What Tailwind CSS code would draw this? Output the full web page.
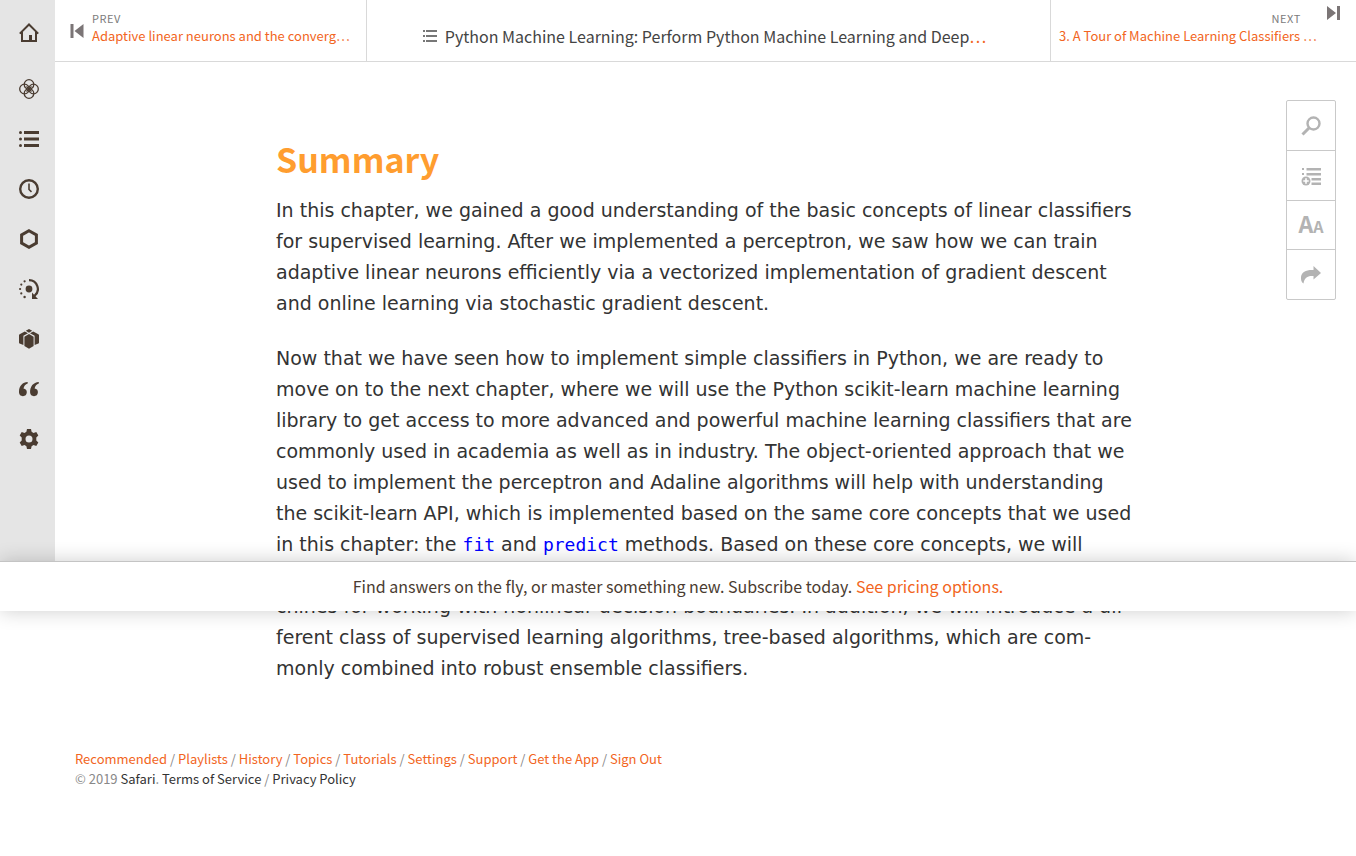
<!DOCTYPE html>
<html lang="en">
<head>
<meta charset="utf-8">
<title>Summary - Python Machine Learning</title>
<script src="https://cdn.jsdelivr.net/npm/@tailwindcss/browser@4"></script>
</head>
<body class="relative min-h-screen bg-white font-['Noto_Sans_CJK_KR',sans-serif] text-[#333]">
<div class="flex">
  <nav aria-label="Main" class="h-[611px] w-[55px] shrink-0 bg-[#e5e5e5] pt-2 text-[#4a3c31]">
    <ul class="flex flex-col items-center pl-[3px]">
      <li class="mb-1.5"><a href="#" aria-label="Home" class="flex size-[50px] items-center justify-center"><svg class="size-5" viewBox="0 0 20 20" fill="none" stroke="currentColor" stroke-width="2"><path d="M.8 10.6 10 1.500l9.200 9.100M3 9v9h14V9"/><path d="M10 18v-6h3v6" fill="currentColor" stroke="none"/></svg></a></li>
      <li><a href="#" aria-label="Recommended" class="flex size-[50px] items-center justify-center"><svg class="size-5" viewBox="0 0 20 20" fill="none" stroke="currentColor" stroke-width="1.300"><circle cx="10" cy="5.500" r="4.800"/><circle cx="10" cy="14.500" r="4.800"/><circle cx="5.500" cy="10" r="4.800"/><circle cx="14.500" cy="10" r="4.800"/><path d="m7.500 7.500 5 5m0-5-5 5"/></svg></a></li>
      <li><a href="#" aria-label="Playlists" class="flex size-[50px] items-center justify-center"><svg class="size-5" viewBox="0 0 20 20" fill="currentColor"><path d="M5 2h15v3H5zM5 8.500h15v3H5zM5 15h15v3H5z"/><circle cx="1.500" cy="3.500" r="1.500"/><circle cx="1.500" cy="10" r="1.500"/><circle cx="1.500" cy="16.500" r="1.500"/></svg></a></li>
      <li><a href="#" aria-label="History" class="flex size-[50px] items-center justify-center"><svg class="size-5" viewBox="0 0 20 20" fill="none" stroke="currentColor"><circle cx="10" cy="10" r="8.800" stroke-width="2.400"/><path d="M10 4.500v6l2.500 2.300" stroke-width="1.600"/></svg></a></li>
      <li><a href="#" aria-label="Topics" class="flex size-[50px] items-center justify-center"><svg class="size-5" viewBox="0 0 20 20" fill="none" stroke="currentColor" stroke-width="3"><path d="m10 1.700 7.400 4.200v8.200L10 18.300l-7.400-4.200V5.900z"/></svg></a></li>
      <li><a href="#" aria-label="Tutorials" class="flex size-[50px] items-center justify-center"><svg class="size-5" viewBox="0 0 20 20" fill="currentColor"><circle cx="10" cy="10" r="3.400"/><path d="M10 1.100A8.900 8.900 0 0 1 15.400 17" fill="none" stroke="currentColor" stroke-width="2.200"/><path d="M13 13.500V20h6z"/><circle cx="5.600" cy="2.300" r="1.100"/><circle cx="2.300" cy="5.600" r="1.100"/><circle cx="1.100" cy="10" r="1.100"/><circle cx="2.300" cy="14.400" r="1.100"/><circle cx="5.600" cy="18" r="1.200"/></svg></a></li>
      <li><a href="#" aria-label="Offers" class="flex size-[50px] items-center justify-center"><svg class="size-5" viewBox="0 0 20 20" fill="currentColor"><path d="m10 0 3.200 1.800L10 3.700 6.800 1.800zM5.800 2.400l3.200 1.800-4.600 2.600v9.200L.6 14.600Q0 14.300 0 13.500V6.300q0-.7.600-1zM14.200 2.400 11 4.200l4.600 2.600v9.200l3.800-1.400q.6-.3.600-1.100V6.300q0-.7-.6-1z"/><path d="m10 5 4.600 2.700v9.200L10 19.800l-4.600-2.900V7.700z"/></svg></a></li>
      <li><a href="#" aria-label="Highlights" class="flex size-[50px] items-center justify-center"><svg class="size-5" viewBox="0 0 20 20" fill="currentColor"><path d="M8.700 3v1.500C6.500 5.200 5 7 4.500 9.400A3.900 3.900 0 1 1 0 13.600C-.3 7.500 3.200 3.300 8.700 3z"/><path d="M19.800 3v1.500c-2.200.7-3.700 2.500-4.200 4.900a3.900 3.900 0 1 1-4.500 4.200C10.800 7.500 14.300 3.300 19.800 3z"/></svg></a></li>
      <li><a href="#" aria-label="Settings" class="flex size-[50px] items-center justify-center"><svg class="size-5" viewBox="0 0 20 20" fill="currentColor" fill-rule="evenodd"><path d="M8 0h4l.6 2.800 1.900 1.100 2.800-.9 2 3.500L17.300 8.500v3l2 2-2 3.500-2.800-.9-1.900 1.100L12 20H8l-.6-2.800-1.900-1.100-2.800.9-2-3.500 2-2v-3l-2-2 2-3.500 2.800.9 1.900-1.100zM10 6.500a3.500 3.500 0 1 0 0 7 3.500 3.500 0 0 0 0-7z"/></svg></a></li>
    </ul>
  </nav>

  <div class="min-w-0 flex-1">
    <header class="flex h-[62px] border-b border-[#d9d9d9]">
      <a href="#" class="flex w-[312px] shrink-0 gap-2 border-r border-[#d9d9d9] pl-[15px] pt-[9px]">
        <svg class="mt-[15px] h-3.5 w-[14px] shrink-0 fill-[#7b7576]" viewBox="0 0 13 14"><path d="M0 0h3v14H0zM13 0v14L4 7z"/></svg>
        <span class="block whitespace-nowrap">
          <span class="block text-[11px] leading-[18px] tracking-wider text-[#7b7b7b]">PREV</span>
          <span class="block text-[13px] leading-[18px] text-[#f26522]">Adaptive linear neurons and the converg…</span>
        </span>
      </a>
      <a href="#" class="flex min-w-0 flex-1 items-center justify-center gap-2 pr-2 pt-2.5 text-[16px] text-[#f26522]">
        <svg class="h-3 w-[14px] shrink-0 fill-[#777]" viewBox="0 0 14 12"><path d="M0 0h2v2H0zM3 0h11v2H3zM0 5h2v2H0zM3 5h11v2H3zM0 10h2v2H0zM3 10h11v2H3z"/></svg>
        <span class="whitespace-nowrap leading-6"><span class="text-[#444]">Python Machine Learning: Perform Python Machine Learning and Deep</span>…</span>
      </a>
      <a href="#" class="flex w-[306px] shrink-0 justify-between border-l border-[#d9d9d9] pl-2 pr-4">
        <span class="block whitespace-nowrap pt-[9px]">
          <span class="block pr-4 text-right text-[11px] leading-[18px] tracking-wider text-[#7b7b7b]">NEXT</span>
          <span class="block text-[13px] leading-[18px] text-[#f26522]">3. A Tour of Machine Learning Classifiers …</span>
        </span>
        <svg class="mt-1.5 h-3.5 w-[13px] shrink-0 fill-[#7b7576]" viewBox="0 0 13 14"><path d="M10 0h3v14h-3zM0 0v14l9-7z"/></svg>
      </a>
    </header>

    <main class="mx-auto max-w-[859px] pt-[72px] font-['DejaVu_Sans',sans-serif] text-[19px] leading-[31px]">
      <h1 class="mb-[11px] font-['Noto_Sans_CJK_KR',sans-serif] text-[34px] font-bold leading-[50px] text-[#ff9d2f]">Summary</h1>
      <p class="mb-6 whitespace-nowrap">In this chapter, we gained a good understanding of the basic concepts of linear classifiers<br>for supervised learning. After we implemented a perceptron, we saw how we can train<br>adaptive linear neurons efficiently via a vectorized implementation of gradient descent<br>and online learning via stochastic gradient descent.</p>
      <p class="whitespace-nowrap">Now that we have seen how to implement simple classifiers in Python, we are ready to<br>move on to the next chapter, where we will use the Python scikit-learn machine learning<br>library to get access to more advanced and powerful machine learning classifiers that are<br>commonly used in academia as well as in industry. The object-oriented approach that we<br>used to implement the perceptron and Adaline algorithms will help with understanding<br>the scikit-learn API, which is implemented based on the same core concepts that we used<br>in this chapter: the <code class="font-['DejaVu_Sans_Mono',monospace] text-[18px] text-[#00f]">fit</code> and <code class="font-['DejaVu_Sans_Mono',monospace] text-[18px] text-[#00f]">predict</code> methods. Based on these core concepts, we will<br>discuss logistic regression for class probabilities, as well as support vector ma-<br>chines for working with nonlinear decision boundaries. In addition, we will introduce a dif-<br>ferent class of supervised learning algorithms, tree-based algorithms, which are com-<br>monly combined into robust ensemble classifiers.</p>
    </main>

    <footer class="px-5 pt-[65px] text-[13px] leading-5 text-[#888]">
      <p><a href="#" class="text-[#f26522]">Recommended</a> / <a href="#" class="text-[#f26522]">Playlists</a> / <a href="#" class="text-[#f26522]">History</a> / <a href="#" class="text-[#f26522]">Topics</a> / <a href="#" class="text-[#f26522]">Tutorials</a> / <a href="#" class="text-[#f26522]">Settings</a> / <a href="#" class="text-[#f26522]">Support</a> / <a href="#" class="text-[#f26522]">Get the App</a> / <a href="#" class="text-[#f26522]">Sign Out</a></p>
      <p>© 2019 <a href="#" class="text-[#333]">Safari</a>. <a href="#" class="text-[#333]">Terms of Service</a> / <a href="#" class="text-[#333]">Privacy Policy</a></p>
    </footer>
  </div>
</div>

<div class="absolute right-5 top-[100px] w-[50px] divide-y divide-[#c9c9c9] rounded-xs border border-[#c9c9c9] bg-white text-[#b3b3b3]">
  <button type="button" aria-label="Search" class="flex h-[50px] w-full items-center justify-center"><svg class="size-5" viewBox="0 0 20 20" fill="none" stroke="currentColor"><circle cx="12.500" cy="7.500" r="6" stroke-width="2.400"/><path d="m8 12-6.500 6.500" stroke-width="3"/></svg></button>
  <button type="button" aria-label="Add to playlist" class="flex h-[50px] w-full items-center justify-center"><svg class="size-5" viewBox="0 0 20 20" fill="currentColor"><path d="M1 2h2v2H1zM5.500 2H20v2.500H5.500zM1 7h2v2H1zM5.500 7H20v2.500H5.500zM10.500 12H20v2.500h-9.500zM10.500 16.500H20V19h-9.500z"/><circle cx="5" cy="15" r="4.500"/><path d="M5 12.300v5.400M2.300 15h5.400" fill="none" stroke="#fff" stroke-width="1.600"/></svg></button>
  <button type="button" aria-label="Font size" class="flex h-[49px] w-full items-baseline justify-center pt-2 font-bold leading-7"><span class="text-[23px]">A</span><span class="text-[16px]">A</span></button>
  <button type="button" aria-label="Share" class="flex h-[49px] w-full items-center justify-center"><svg class="h-5 w-[22px]" viewBox="0 0 22 20" fill="currentColor"><path d="M13.500 1 21 8l-7.500 6.500V11C8 10.500 4.500 12 3.500 18.500 1.500 17.500.8 15 1 12 1.500 7 6.500 4.500 13.500 5z"/></svg></button>
</div>

<aside class="absolute inset-x-0 top-[561px] flex h-[50px] items-center justify-center border-t border-[#c4c4c4] bg-white pb-0.5 text-[16px] leading-6 text-[#4a3c31] shadow-[0_0_20px_rgba(0,0,0,0.2)]">
  <p>Find answers on the fly, or master something new. Subscribe today. <a href="#" class="text-[#f26522]">See pricing options.</a></p>
</aside>
</body>
</html>
